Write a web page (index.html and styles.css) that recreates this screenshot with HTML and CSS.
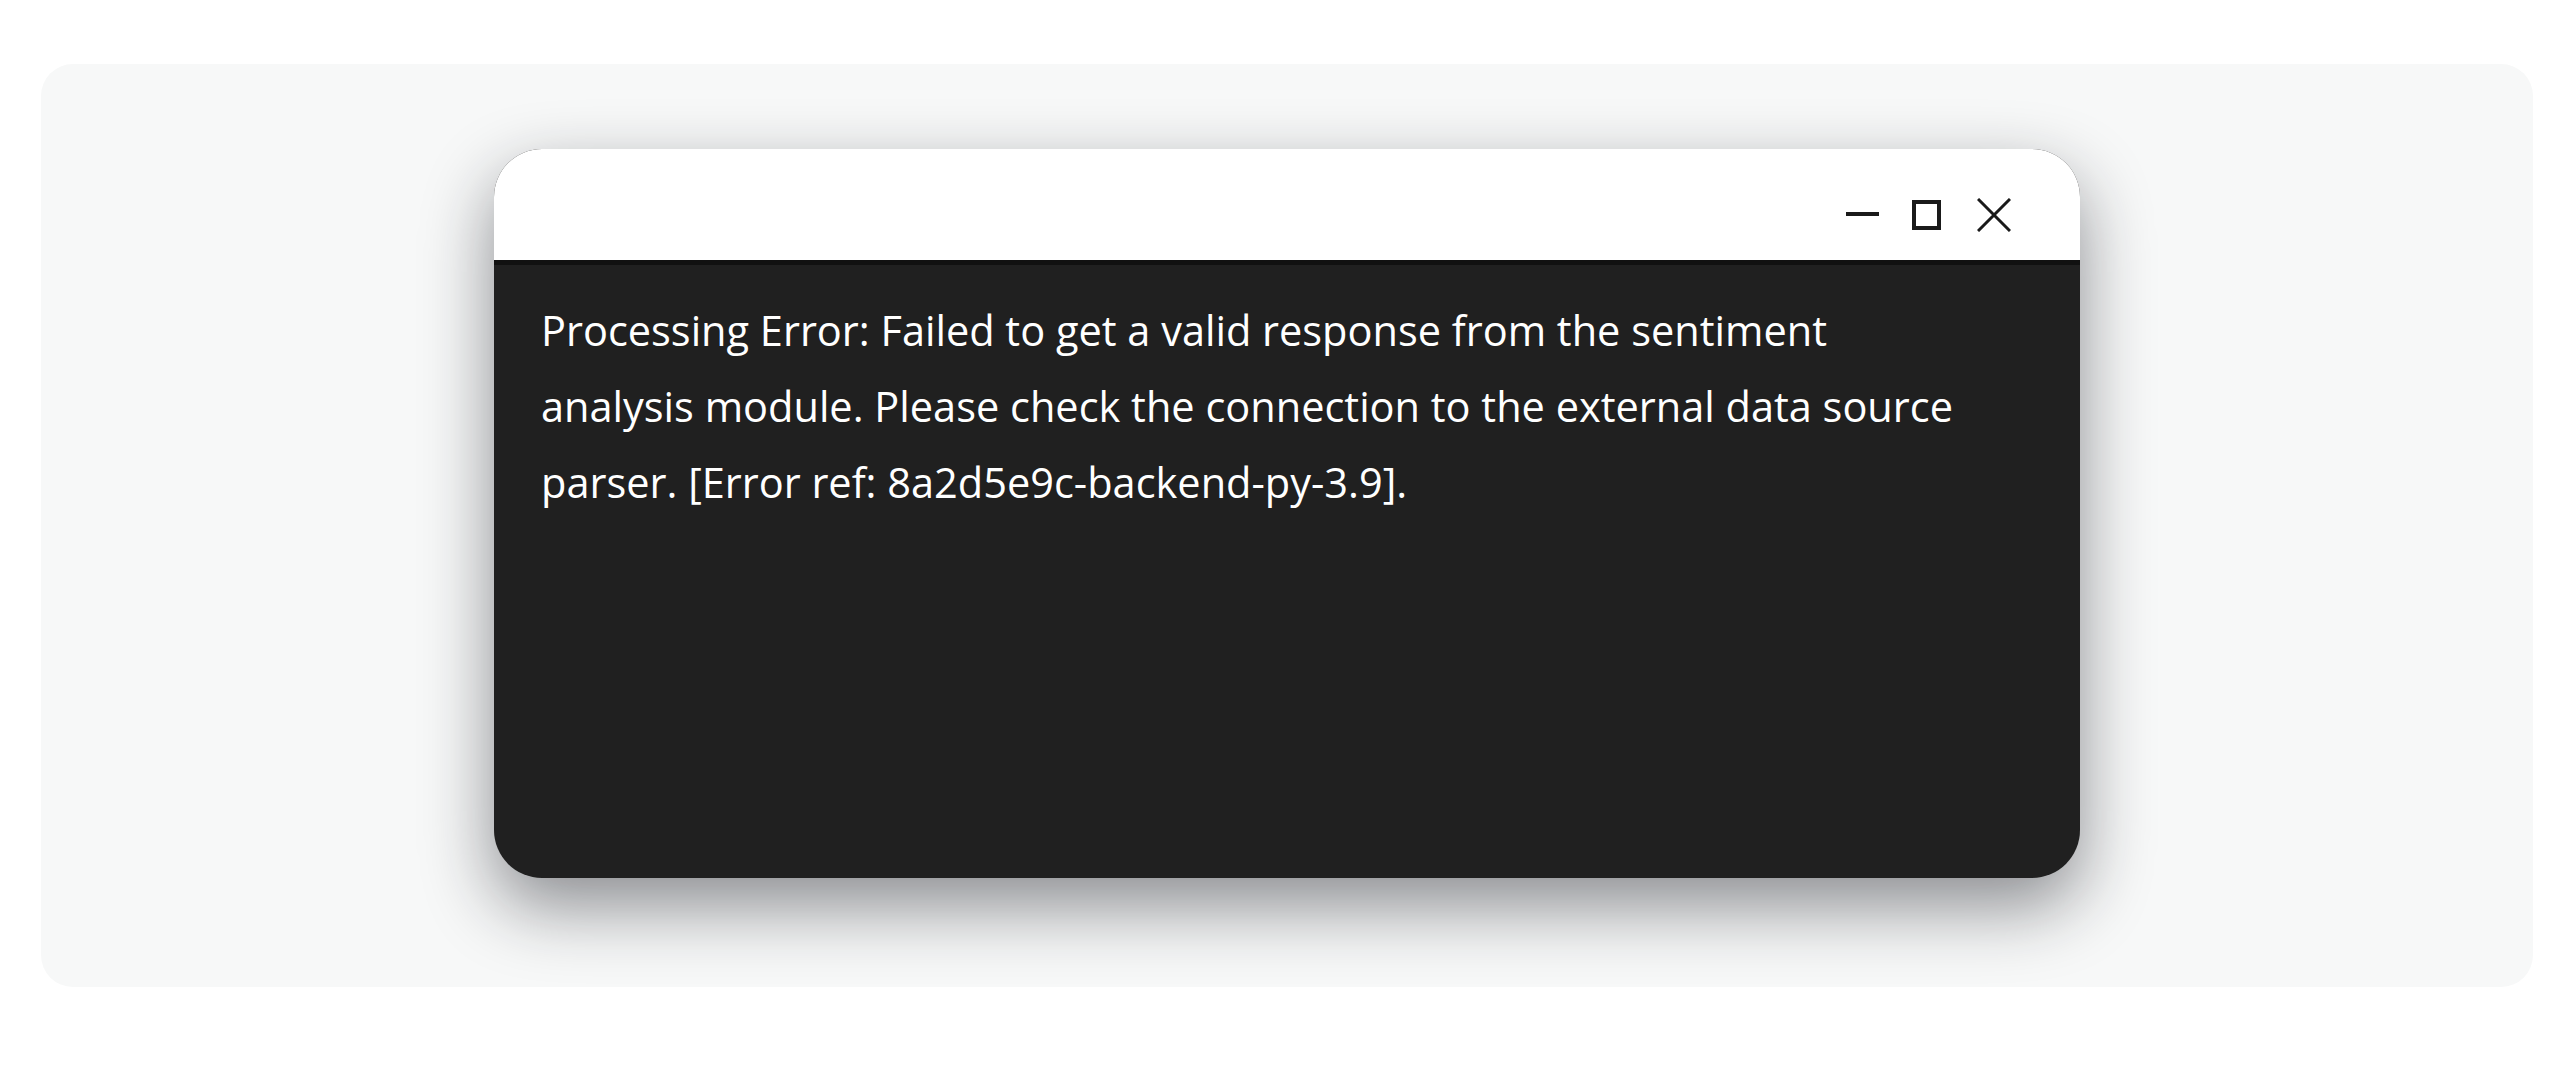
FILE: index.html
```html
<!DOCTYPE html>
<html lang="en">
<head>
<meta charset="utf-8">
<title>Processing Error</title>
<link rel="stylesheet" href="styles.css">
</head>
<body>
<div class="card">
  <div class="window">
    <div class="titlebar">
      <div class="controls">
        <svg class="ic ic-min" width="34" height="34" viewBox="0 0 34 34"><line x1="0" y1="16" x2="33" y2="16" stroke="#1a1a1a" stroke-width="4"/></svg>
        <svg class="ic ic-max" width="30" height="34" viewBox="0 0 30 34"><rect x="2" y="4" width="25" height="26" fill="none" stroke="#1a1a1a" stroke-width="4"/></svg>
        <svg class="ic ic-close" width="34" height="34" viewBox="0 0 34 34"><path d="M1 1 L33 33 M33 1 L1 33" stroke="#1a1a1a" stroke-width="3" fill="none"/></svg>
      </div>
    </div>
    <div class="content">
      <p class="message">Processing Error: Failed to get a valid response from the sentiment analysis module. Please check the connection to the external data source parser. [Error ref: 8a2d5e9c-backend-py-3.9].</p>
    </div>
  </div>
</div>
</body>
</html>
```

FILE: styles.css
```css
html, body {
  margin: 0;
  padding: 0;
  background: #ffffff;
}
body {
  padding: 64px 41px 0 41px;
  font-family: "Open Sans", "Noto Sans", sans-serif;
}
.card {
  height: 923px;
  background: #f7f8f8;
  border-radius: 32px;
  box-sizing: border-box;
  padding-top: 85px;
  display: flex;
  justify-content: center;
  align-items: flex-start;
}
.window {
  width: 1586px;
  height: 729px;
  border-radius: 48px;
  background: #202020;
  overflow: hidden;
  display: flex;
  flex-direction: column;
  box-shadow: 0 28px 70px rgba(20, 24, 32, 0.48);
}
.titlebar {
  flex: none;
  background: #ffffff;
  border-bottom: 5px solid #111111;
  display: flex;
  justify-content: flex-end;
  align-items: center;
  padding-top: 21px;
  box-sizing: border-box;
  height: 116px;
}
.controls {
  display: flex;
  align-items: center;
  gap: 32px;
  padding-right: 69px;
}
.ic { display: block; }
.ic-close { margin-left: 3px; }
.content {
  flex: 1;
  padding: 27px 47px 0 47px;
}
.message {
  margin: 0;
  color: #ffffff;
  font-size: 41.5px;
  line-height: 76px;
  max-width: 1440px;
}
```
